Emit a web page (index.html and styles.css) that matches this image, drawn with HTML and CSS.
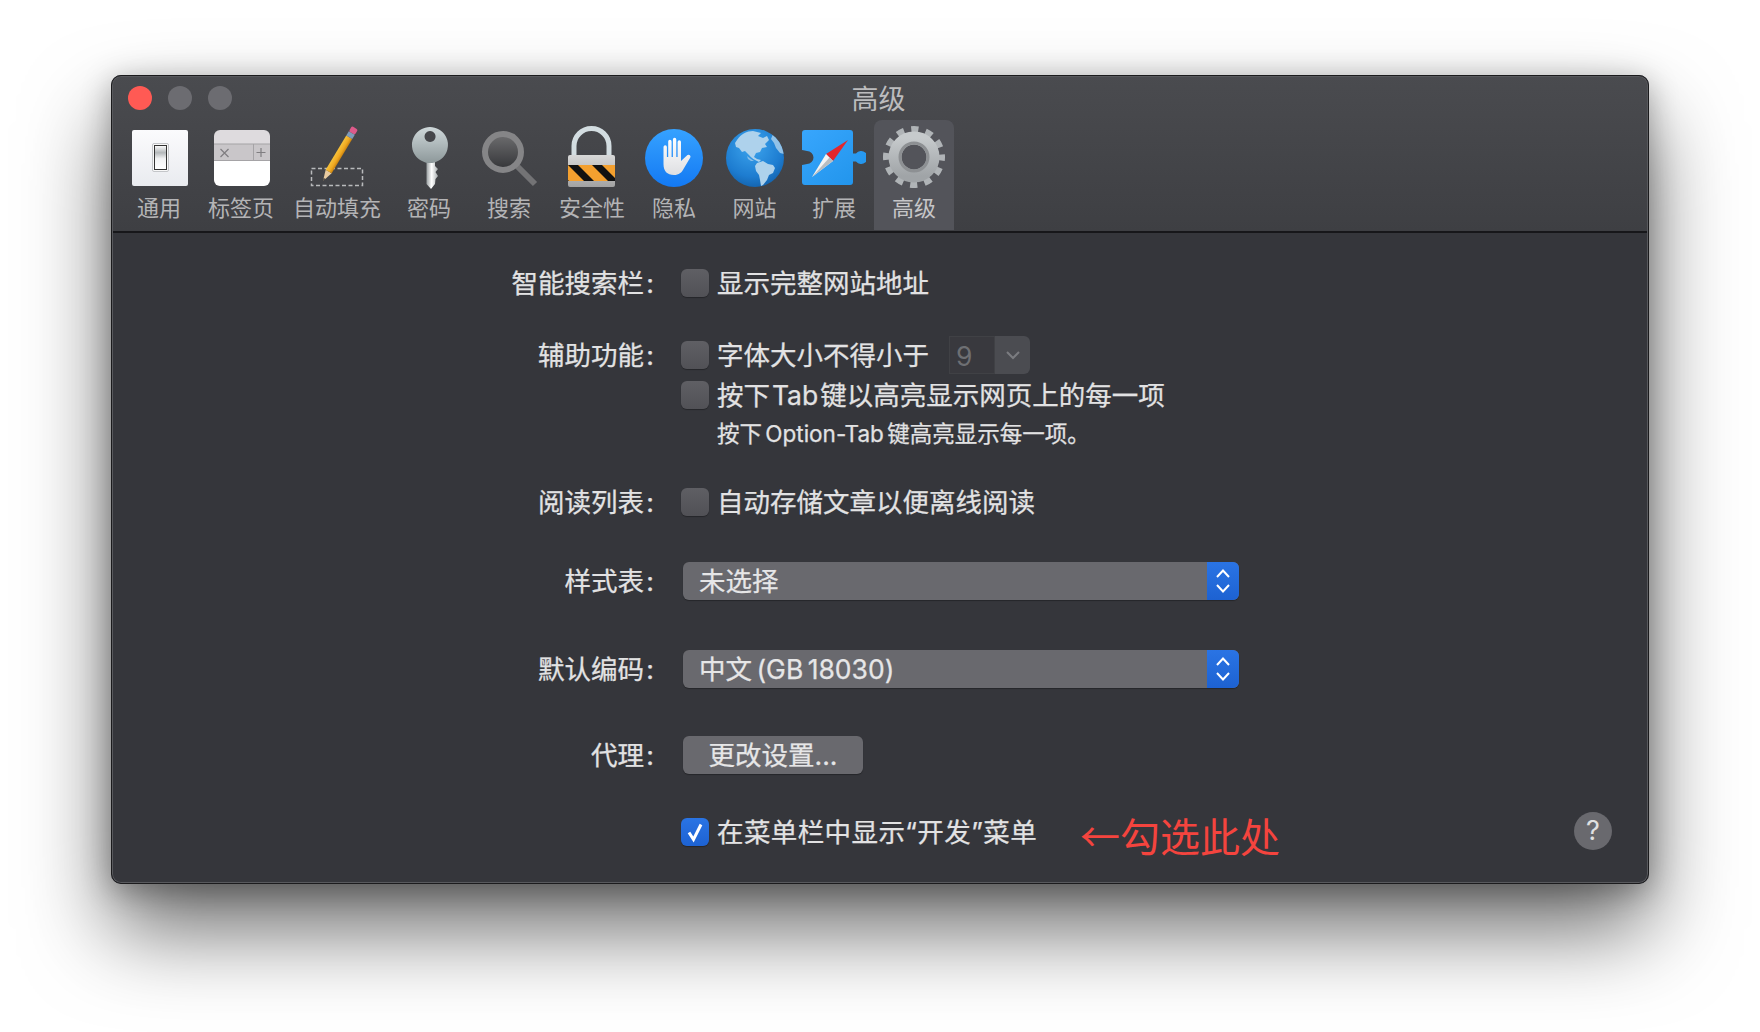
FILE: index.html
```html
<!DOCTYPE html>
<html lang="zh-CN">
<head>
	<meta charset="UTF-8">
	<title>高级</title>
	<link rel="stylesheet" href="styles.css">
</head>
<body>
	<div class="window">
		<div class="header">
			<div class="titlebar">
				<div class="lights">
					<span class="light red"></span>
					<span class="light"></span>
					<span class="light"></span>
				</div>
				<div class="title">高级</div>
				<div></div>
			</div>
			<ul class="toolbar">
				<li class="tool w80">
					<svg class="icon" viewBox="0 0 64 64">
						<defs>
							<linearGradient id="paper" x1="0" y1="0" x2="0" y2="1"><stop offset="0" stop-color="#fbfbfd"/><stop offset="1" stop-color="#e9ebef"/></linearGradient>
							<linearGradient id="switch" x1="0" y1="0" x2="0" y2="1"><stop offset="0" stop-color="#fff"/><stop offset=".3" stop-color="#b4b8ba"/><stop offset=".55" stop-color="#f2f3f4"/><stop offset="1" stop-color="#fff"/></linearGradient>
						</defs>
						<rect x="5" y="4" width="56" height="56" rx="2" fill="url(#paper)"/>
						<rect x="25.5" y="17.5" width="16" height="28" rx="1.5" fill="#f8f8f8" stroke="#c4c6c9"/>
						<rect x="27.5" y="19.5" width="12" height="24" fill="url(#switch)" stroke="#333" stroke-width="1"/>
					</svg>
					<span>通用</span>
				</li>
				<li class="tool w84">
					<svg class="icon" viewBox="0 0 64 64">
						<defs><clipPath id="tabclip"><rect x="5" y="4" width="56" height="56" rx="6"/></clipPath></defs>
						<g clip-path="url(#tabclip)">
							<rect x="5" y="4" width="56" height="14" fill="#dedbde"/>
							<rect x="5" y="18" width="56" height="16" fill="#c9c6c9"/>
							<rect x="5" y="34" width="56" height="26" fill="#fff"/>
							<path d="M5 18H61M5 34.500H61M44.500 18V34" stroke="#a5a3a6" stroke-width="1" fill="none"/>
							<path d="M11.500 23L19.500 31M19.500 23L11.500 31M52 22V31M47.500 26.500H56.500" stroke="#7f7d80" stroke-width="1.200" fill="none"/>
						</g>
					</svg>
					<span>标签页</span>
				</li>
				<li class="tool w108">
					<svg class="icon" viewBox="0 0 64 64">
						<defs><linearGradient id="pencil" x1="0" y1="0" x2="1" y2="0"><stop offset="0" stop-color="#f7c23a"/><stop offset=".6" stop-color="#f0a922"/><stop offset="1" stop-color="#c9820f"/></linearGradient></defs>
						<rect x="6.500" y="42.500" width="51" height="17" fill="none" stroke="#b9babc" stroke-width="1.500" stroke-dasharray="4 2.500"/>
						<g transform="translate(18 55) rotate(31)">
							<path d="M0 0L-3.500 -11H3.500Z" fill="#e8cba0"/>
							<path d="M0 0L-1 -3H1Z" fill="#333"/>
							<rect x="-3.500" y="-51" width="7" height="40" fill="url(#pencil)"/>
							<rect x="-3.500" y="-56" width="7" height="5" fill="#7f9bb8"/>
							<rect x="-3.500" y="-62" width="7" height="6" rx="1.500" fill="#dd5a8a"/>
						</g>
					</svg>
					<span>自动填充</span>
				</li>
				<li class="tool w76">
					<svg class="icon" viewBox="0 0 64 64">
						<defs>
							<linearGradient id="keyhead" x1="0" y1="0" x2="0" y2="1"><stop offset="0" stop-color="#cfd8da"/><stop offset="1" stop-color="#8d989a"/></linearGradient>
							<linearGradient id="keyshaft" x1="0" y1="0" x2="1" y2="0"><stop offset="0" stop-color="#9aa0a2"/><stop offset=".45" stop-color="#fff"/><stop offset="1" stop-color="#a6abad"/></linearGradient>
						</defs>
						<path d="M29.500 30H38V40L41 43L38.500 46L41 50L38.500 53L38 58L34 63L29.500 58Z" fill="url(#keyshaft)"/>
						<path fill-rule="evenodd" d="M33 1A18 18 0 1 1 32.900 1ZM33 5A5.500 5.500 0 1 0 33.100 5Z" fill="url(#keyhead)"/>
					</svg>
					<span>密码</span>
				</li>
				<li class="tool w84">
					<svg class="icon" viewBox="0 0 64 64">
						<defs><linearGradient id="lens" x1="0" y1="0" x2="0" y2="1"><stop offset="0" stop-color="#6e6e70"/><stop offset="1" stop-color="#333437"/></linearGradient></defs>
						<path d="M39 39L58 58" stroke="#737375" stroke-width="6" fill="none"/>
						<circle cx="26" cy="26" r="18" fill="url(#lens)" stroke="#858587" stroke-width="6"/>
					</svg>
					<span>搜索</span>
				</li>
				<li class="tool w82">
					<svg class="icon" viewBox="0 0 64 64">
						<defs>
							<linearGradient id="metal" x1="0" y1="0" x2="0" y2="1"><stop offset="0" stop-color="#d8d8d8"/><stop offset="1" stop-color="#a2a2a2"/></linearGradient>
							<clipPath id="band"><rect x="8" y="39" width="47" height="16"/></clipPath>
						</defs>
						<path d="M14 30V20A17.500 17.500 0 0 1 49 20V30" fill="none" stroke="#d3dde1" stroke-width="5"/>
						<rect x="8" y="29" width="47" height="32" rx="2" fill="url(#metal)"/>
						<g clip-path="url(#band)">
							<rect x="8" y="39" width="47" height="16" fill="#f4a02f"/>
							<path d="M8 39H18L34 55H24ZM32 39H42L58 55H48ZM-2 44L9 55H-2Z" fill="#111"/>
						</g>
					</svg>
					<span>安全性</span>
				</li>
				<li class="tool w82">
					<svg class="icon" viewBox="0 0 64 64">
						<defs>
							<linearGradient id="bluedisc" x1="0" y1="0" x2="0" y2="1"><stop offset="0" stop-color="#36a2ff"/><stop offset="1" stop-color="#1379f3"/></linearGradient>
							<linearGradient id="palm" x1="0" y1="0" x2="0" y2="1"><stop offset="0" stop-color="#fff"/><stop offset="1" stop-color="#dedfe2"/></linearGradient>
						</defs>
						<circle cx="32" cy="32" r="29" fill="url(#bluedisc)"/>
						<path d="M21.500 21a1.700 1.700 0 0 1 3.400 0V31h1.300V15.500a1.700 1.700 0 0 1 3.400 0V31h1.300V13.500a1.700 1.700 0 0 1 3.400 0V31h1.300V16a1.700 1.700 0 0 1 3.400 0V35L45.500 29a2 2 0 0 1 2.800 2.600L41.500 43c-1.800 3.500-4.500 6-9.500 6-7 0-10.500-4-10.500-11Z" fill="url(#palm)"/>
					</svg>
					<span>隐私</span>
				</li>
				<li class="tool w78">
					<svg class="icon" viewBox="0 0 64 64">
						<defs>
							<radialGradient id="globe" cx=".45" cy=".3" r=".8"><stop offset="0" stop-color="#3da5ee"/><stop offset=".65" stop-color="#1d7cd0"/><stop offset="1" stop-color="#10599f"/></radialGradient>
							<clipPath id="earth"><circle cx="32" cy="32" r="29"/></clipPath>
						</defs>
						<circle cx="32" cy="32" r="29" fill="url(#globe)"/>
						<g clip-path="url(#earth)" fill="#aed2ec">
							<path d="M14 14C18 8 24 5 30 5L38 7L35 10L40 12L44 10L46 14L42 18L44 21L39 22L37 26L33 27L31 31L34 33L38 34L36 36C32 34 28 32 26 29L22 25L19 26L16 22L13 21L12 17Z"/>
							<path d="M34 37L40 35L45 38L50 39L52 42L50 47L46 49L44 54L40 59L38 60L37 54L36 49L33 45L32 40Z"/>
							<path d="M50 8L54 11L60 20L61 28L57 27L53 22L51 17L48 13Z" opacity=".8"/>
							<path d="M24 30L28 33L31 35L28 35L25 33Z" opacity=".7"/>
						</g>
					</svg>
					<span>网站</span>
				</li>
				<li class="tool w80">
					<svg class="icon" viewBox="0 0 64 64">
						<defs><linearGradient id="puzzle" x1="0" y1="0" x2="1" y2="1"><stop offset="0" stop-color="#38a6fd"/><stop offset="1" stop-color="#1f93ea"/></linearGradient></defs>
						<path d="M3 4H48a3 3 0 0 1 3 3V27.500H54a6.500 6.500 0 1 1 0 8H51V56a3 3 0 0 1 -3 3H3a3 3 0 0 1 -3 -3V39C2 39 3.500 38 5 38A6.500 6.500 0 1 0 5 25C3.500 25 2 24 0 24V7a3 3 0 0 1 3 -3Z" fill="url(#puzzle)"/>
						<path d="M46 14L24 28L31 35Z" fill="#e3262c"/>
						<path d="M10 51L24 28L31 35Z" fill="#f4f4f4"/>
						<path d="M10 51L31 35L27.500 31.500Z" fill="#b9bcc0"/>
					</svg>
					<span>扩展</span>
				</li>
				<li class="tool w80 active">
					<svg class="icon" viewBox="0 0 64 64">
						<defs><linearGradient id="gear" x1="0" y1="0" x2="0" y2="1"><stop offset="0" stop-color="#c6cacc"/><stop offset="1" stop-color="#a0a4a7"/></linearGradient></defs>
						<circle cx="32" cy="31" r="26.500" fill="none" stroke="#b0b4b7" stroke-width="9" stroke-dasharray="7 6.875" stroke-dashoffset="3.500"/>
						<circle cx="32" cy="31" r="19" fill="none" stroke="url(#gear)" stroke-width="13"/>
						<circle cx="32" cy="31" r="14" fill="none" stroke="#8d9093" stroke-width="3"/>
					</svg>
					<span>高级</span>
				</li>
			</ul>
		</div>

		<div class="form">
			<div class="row first">
				<div class="label">智能搜索栏&#8202;:</div>
				<span class="check"></span>
				<span class="text">显示完整网站地址</span>
			</div>
			<div class="row group">
				<div class="label">辅助功能&#8202;:</div>
				<span class="check"></span>
				<span class="text">字体大小不得小于</span>
				<div class="stepper">
					<span class="stepper-value">9</span>
					<span class="stepper-arrow">
						<svg width="16" height="10" viewBox="0 0 16 10"><path d="M2 2L8 8L14 2" fill="none" stroke="#7b7c80" stroke-width="2"/></svg>
					</span>
				</div>
			</div>
			<div class="row tight">
				<div class="label"></div>
				<span class="check"></span>
				<span class="text narrow">按下 Tab 键以高亮显示网页上的每一项</span>
			</div>
			<div class="row tight">
				<div class="label"></div>
				<span class="hint">按下 Option-Tab 键高亮显示每一项。</span>
			</div>
			<div class="row reading">
				<div class="label">阅读列表&#8202;:</div>
				<span class="check"></span>
				<span class="text">自动存储文章以便离线阅读</span>
			</div>
			<div class="row sheet">
				<div class="label">样式表&#8202;:</div>
				<div class="select">
					<span class="select-text">未选择</span>
					<span class="select-arrows">
						<svg width="16" height="26" viewBox="0 0 16 26"><path d="M2 9L8 2.500L14 9M2 17L8 23.500L14 17" fill="none" stroke="#fff" stroke-width="2"/></svg>
					</span>
				</div>
			</div>
			<div class="row encoding">
				<div class="label">默认编码&#8202;:</div>
				<div class="select">
					<span class="select-text">中文 (GB 18030)</span>
					<span class="select-arrows">
						<svg width="16" height="26" viewBox="0 0 16 26"><path d="M2 9L8 2.500L14 9M2 17L8 23.500L14 17" fill="none" stroke="#fff" stroke-width="2"/></svg>
					</span>
				</div>
			</div>
			<div class="row proxy">
				<div class="label">代理&#8202;:</div>
				<div class="button">更改设置...</div>
			</div>
			<div class="row develop">
				<div class="label"></div>
				<span class="check on">
					<svg width="20" height="22" viewBox="0 0 20 22"><path d="M4 11.500L8.500 18.500L16 3.500" fill="none" stroke="#fff" stroke-width="3"/></svg>
				</span>
				<span class="text spaced">在菜单栏中显示“开发”菜单</span>
				<span class="note">←勾选此处</span>
				<span class="help">?</span>
			</div>
		</div>
	</div>
</body>
</html>
```

FILE: styles.css
```css
html, body {
	margin: 0;
	padding: 0;
}

body {
	height: 1032px;
	overflow: hidden;
	background-color: #fff;
	font-family: Inter, "Noto Sans CJK SC", sans-serif;
}

ul, li {
	margin: 0;
	padding: 0;
	list-style: none;
}

.window {
	position: relative;
	box-sizing: border-box;
	width: 1538px;
	height: 809px;
	margin: 75px auto 0;
	border-radius: 10px;
	background-color: #35363b;
	box-shadow: 0 46px 86px rgba(0,0,0,.58), 0 6px 30px rgba(0,0,0,.3);
	overflow: hidden;
}

/* hairline edge drawn over the content */
.window::after {
	content: "";
	position: absolute;
	top: 0;
	right: 0;
	bottom: 0;
	left: 0;
	border: 1px solid #1b1b1d;
	border-radius: 10px;
	box-shadow: inset 0 0 0 1px #58595d;
	pointer-events: none;
}

.header {
	height: 158px;
	box-sizing: border-box;
	background: linear-gradient(#4a4b4f, #3e3f43);
	border-bottom: 2px solid #17171a;
}

.titlebar {
	display: grid;
	grid-template-columns: 1fr auto 1fr;
	align-items: center;
	height: 45px;
	padding-top: 1px;
	box-sizing: border-box;
}

.lights {
	display: flex;
	gap: 16px;
	padding-left: 17px;
}

.light {
	width: 24px;
	height: 24px;
	border-radius: 50%;
	background-color: #6c6c71;
}

.light.red {
	background-color: #ff5a54;
}

.title {
	margin-top: 4px;
	padding-right: 3px;
	font-size: 27px;
	line-height: 30px;
	color: #bcbcbe;
}

.toolbar {
	display: flex;
	padding-left: 8px;
}

.tool {
	display: flex;
	flex-direction: column;
	align-items: center;
	height: 110px;
	box-sizing: border-box;
	padding-top: 6px;
	color: #b4b4b6;
	font-size: 22px;
	line-height: 30px;
	white-space: nowrap;
}

.tool span {
	margin-top: 3px;
}

.tool.active {
	border-radius: 8px 8px 0 0;
	background-color: #53545a;
	color: #c6c6c8;
}

.icon {
	display: block;
	width: 64px;
	height: 64px;
	flex: none;
}

.w76 { width: 76px; }
.w78 { width: 79px; }
.w80 { width: 80px; }
.w82 { width: 82px; }
.w84 { width: 84px; }
.w108 { width: 108px; }

.form {
	padding-right: 37px;
	color: #e2e2e3;
	font-size: 26.500px;
	-webkit-text-stroke: .25px;
}

.row {
	display: flex;
	align-items: center;
	height: 38px;
	line-height: 38px;
	white-space: nowrap;
}

.row.first { margin-top: 31px; }
.row.group { margin-top: 34px; }
.row.tight { margin-top: 2px; }
.row.reading { margin-top: 29px; }
.row.sheet { margin-top: 41px; }
.row.encoding { margin-top: 50px; }
.row.proxy { margin-top: 48px; }
.row.develop { margin-top: 39px; }

.label {
	flex: none;
	width: 543px;
	margin-right: 27px;
	text-align: right;
}

.check {
	flex: none;
	display: flex;
	align-items: center;
	justify-content: center;
	width: 28px;
	height: 28px;
	margin-right: 8px;
	border-radius: 6px;
	background: linear-gradient(#5f5f64, #515156);
	box-shadow: 0 1px 1px rgba(0,0,0,.3);
}

.check.on {
	background: linear-gradient(#2a74e4, #1d62d2);
}

.text.narrow {
	word-spacing: -5.500px;
}

.text.spaced {
	letter-spacing: .4px;
}

.hint {
	margin-left: 36px;
	padding-bottom: 2px;
	font-size: 22.500px;
	line-height: 38px;
	word-spacing: -3px;
}

.stepper {
	display: flex;
	width: 81px;
	height: 38px;
	margin-left: 20px;
	-webkit-text-stroke: 0;
}

.stepper-value {
	width: 46px;
	box-sizing: border-box;
	padding-left: 6px;
	border: 1px solid #404145;
	background-color: #39393e;
	color: #6e6f73;
}

.stepper-arrow {
	display: flex;
	align-items: center;
	justify-content: center;
	flex: 1;
	border-radius: 0 6px 6px 0;
	background-color: #4b4c51;
}

.select {
	display: flex;
	width: 556px;
	height: 38px;
	margin-left: 2px;
	border-radius: 6px;
	overflow: hidden;
	background-color: #69696e;
	box-shadow: 0 1px 1px rgba(0,0,0,.3);
}

.select-text {
	flex: 1;
	padding-left: 16px;
	color: #e6e6e7;
	word-spacing: -3px;
}

.select-arrows {
	display: flex;
	align-items: center;
	justify-content: center;
	width: 32px;
	background: linear-gradient(#2a74e4, #1d62d2);
}

.button {
	width: 180px;
	height: 38px;
	margin-left: 2px;
	border-radius: 6px;
	background-color: #69696e;
	box-shadow: 0 1px 1px rgba(0,0,0,.3);
	color: #e6e6e7;
	text-align: center;
}

.note {
	margin: 6px 0 0 43px;
	color: #f4443e;
	font-family: "Noto Sans CJK SC", sans-serif;
	font-size: 40px;
	-webkit-text-stroke: 0;
}

.help {
	display: block;
	width: 38px;
	height: 38px;
	margin: -3px 0 0 auto;
	border-radius: 50%;
	background-color: #69696e;
	color: #e0e0e1;
	text-align: center;
	font-size: 27px;
	-webkit-text-stroke: 0;
}
```
